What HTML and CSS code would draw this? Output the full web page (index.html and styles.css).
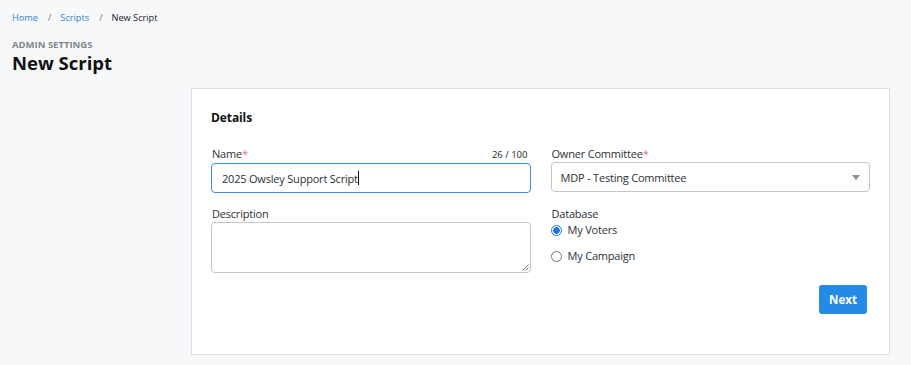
FILE: index.html
```html
<!DOCTYPE html>
<html>
<head>
<meta charset="utf-8">
<link rel="stylesheet" href="styles.css">
</head>
<body>
<div class="page">
  <nav class="crumbs">
    <a class="crumb-link">Home</a><span class="sep">/</span><a class="crumb-link">Scripts</a><span class="sep">/</span><span class="crumb-current">New Script</span>
  </nav>
  <div class="eyebrow">ADMIN SETTINGS</div>
  <h1 class="title">New Script</h1>
  <div class="layout">
    <div class="side"></div>
    <section class="card">
      <h2 class="card-title">Details</h2>
      <div class="grid">
        <div class="field">
          <div class="label-row"><label class="label">Name<span class="req">*</span></label><span class="count">26 / 100</span></div>
          <div class="input focused">2025 Owsley Support Script<span class="caret"></span></div>
        </div>
        <div class="field">
          <div class="label-row"><label class="label">Owner Committee<span class="req">*</span></label></div>
          <div class="input select">MDP - Testing Committee<span class="arrow"></span></div>
        </div>
        <div class="field">
          <div class="label-row"><label class="label">Description</label></div>
          <div class="textarea"><svg class="grip" width="7" height="7" viewBox="0 0 7 7"><path d="M6.5 0.5 L0.5 6.5 M6.5 3.5 L3.5 6.5" stroke="#777" stroke-width="1"/></svg></div>
        </div>
        <div class="field">
          <div class="label-row"><label class="label">Database</label></div>
          <div class="radios">
            <div class="radio-row"><span class="radio checked"></span>My Voters</div>
            <div class="radio-row"><span class="radio"></span>My Campaign</div>
          </div>
        </div>
      </div>
      <div class="actions"><button class="btn">Next</button></div>
    </section>
  </div>
</div>
</body>
</html>
```
FILE: styles.css
```css
html, body { margin: 0; padding: 0; }
body {
  background: #f7f8fa;
  font-family: "Open Sans", "Noto Sans", sans-serif;
  color: #212529;
}
.page { padding: 11px 21px 0 12px; }
.crumbs { font-size: 9.2px; line-height: 14px; display: flex; align-items: center; }
.crumb-link { color: #2b85e4; }
.sep { color: #6b7280; margin: 0 9px 0 10px; }
.crumb-current { color: #212529; }
.eyebrow { margin-top: 14px; font-size: 9.5px; font-weight: 700; color: #80868e; line-height: 12px; }
.title { margin: 0; font-size: 18.5px; line-height: 24px; font-weight: 700; color: #111; }
.layout { display: flex; margin-top: 13px; }
.side { width: 179px; flex: none; }
.card {
  flex: 1;
  background: #fff;
  border: 1px solid #dcdfe4;
  padding: 20px 19px 40px 19px;
}
.card-title { margin: 0; font-size: 12px; line-height: 18px; font-weight: 700; color: #111; letter-spacing: -0.1px; }
.grid { display: grid; grid-template-columns: 1fr 1fr; column-gap: 20px; row-gap: 12px; margin-top: 18px; }
.label-row { display: flex; justify-content: space-between; align-items: baseline; line-height: 17px; }
.label { font-size: 11px; letter-spacing: -0.2px; color: #2d3136; padding-left: 1px; }
.req { color: #e6707a; }
.count { font-size: 9.5px; color: #212529; padding-right: 3px; }
.input {
  height: 28px;
  border: 1px solid #c3c7cc;
  border-radius: 4px;
  display: flex; align-items: center;
  padding: 0 10px;
  font-size: 11px;
  letter-spacing: -0.2px;
  color: #2d3136;
  position: relative;
}
.input.focused { border-color: #3b8fe0; }
.caret { display: inline-block; width: 1px; height: 14px; background: #111; margin-left: 0; }
.select { padding-left: 9px; }
.arrow {
  position: absolute; right: 9px; top: 12px;
  border-left: 4.5px solid transparent; border-right: 4.5px solid transparent; border-top: 5px solid #8a8f96;
}
.textarea {
  height: 49px;
  border: 1px solid #c3c7cc;
  border-radius: 4px;
  position: relative;
}
.grip { position: absolute; right: 1px; bottom: 1px; }
.radios { display: flex; flex-direction: column; gap: 10px; }
.radio-row { display: flex; align-items: center; font-size: 11px; letter-spacing: -0.2px; color: #2d3136; line-height: 16px; }
.radio {
  width: 9px; height: 9px; border: 1px solid #767676; border-radius: 50%;
  margin: 0 6px 0 0; box-sizing: content-box; background: #fff;
}
.radio.checked { border-color: #1a73e8; background: radial-gradient(circle, #1a73e8 0 3px, #fff 3.5px); }
.actions { display: flex; justify-content: flex-end; margin-top: 12px; padding-right: 3px; }
.btn {
  background: #258ae5; color: #fff; border: none; border-radius: 3px;
  font-family: inherit; font-weight: 700; font-size: 11.5px;
  width: 48px; height: 29px; padding: 0;
}
```
